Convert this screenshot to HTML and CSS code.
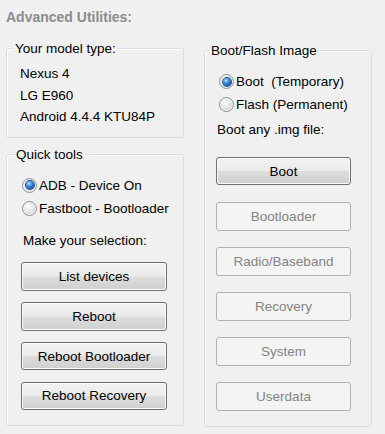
FILE: index.html
```html
<!DOCTYPE html>
<html>
<head>
<meta charset="utf-8">
<title>Advanced Utilities</title>
<link rel="stylesheet" href="styles.css">
</head>
<body>
<div class="page">
  <div class="title">Advanced Utilities:</div>
  <div class="columns">
    <div class="col col-left">
      <fieldset class="group model">
        <legend>Your model type:</legend>
        <div class="info">Nexus 4</div>
        <div class="info">LG E960</div>
        <div class="info">Android 4.4.4 KTU84P</div>
      </fieldset>
      <fieldset class="group quick">
        <legend>Quick tools</legend>
        <label class="radio-row"><span class="radio checked"></span><span class="radio-text">ADB - Device On</span></label>
        <label class="radio-row"><span class="radio"></span><span class="radio-text">Fastboot - Bootloader</span></label>
        <div class="hint">Make your selection:</div>
        <div class="buttons">
          <button class="btn">List devices</button>
          <button class="btn">Reboot</button>
          <button class="btn">Reboot Bootloader</button>
          <button class="btn">Reboot Recovery</button>
        </div>
      </fieldset>
    </div>
    <div class="col col-right">
      <fieldset class="group flash">
        <legend>Boot/Flash Image</legend>
        <label class="radio-row"><span class="radio checked"></span><span class="radio-text">Boot  (Temporary)</span></label>
        <label class="radio-row"><span class="radio"></span><span class="radio-text">Flash (Permanent)</span></label>
        <div class="hint">Boot any .img file:</div>
        <button class="btn boot-btn">Boot</button>
        <div class="disabled-list">
          <button class="btn" disabled>Bootloader</button>
          <button class="btn" disabled>Radio/Baseband</button>
          <button class="btn" disabled>Recovery</button>
          <button class="btn" disabled>System</button>
          <button class="btn" disabled>Userdata</button>
        </div>
      </fieldset>
    </div>
  </div>
</div>
</body>
</html>
```
FILE: styles.css
```css
* { box-sizing: border-box; }

html, body {
  margin: 0;
  padding: 0;
  background: #f0f0f0;
}

body {
  width: 385px;
  height: 434px;
  overflow: hidden;
  font-family: "Liberation Sans", Arial, sans-serif;
  font-size: 13.5px;
  color: #000;
}

.page {
  padding: 9px 0 0 6px;
}

.title {
  font-size: 14px;
  font-weight: bold;
  line-height: 16px;
  color: #8c8c8c;
}

.columns {
  display: flex;
  align-items: flex-start;
  gap: 20px;
  margin-top: 15.5px;
}

.col {
  display: flex;
  flex-direction: column;
}

.col-right {
  margin-top: 2px;
}

.group {
  margin: 0;
  min-width: 0;
  border: 1px solid #d5dfe5;
  border-radius: 3px;
  box-shadow: inset 1px 1px 0 #ffffff;
}

.group legend {
  font-size: 13.5px;
  line-height: 15px;
  padding: 0 1px;
  margin-left: -6px;
}

.model {
  width: 178px;
  padding: 7.5px 6px 9px 13px;
}

.info {
  line-height: 21.5px;
  height: 21.5px;
}

.quick {
  width: 178px;
  margin-top: 9.5px;
  padding: 11.8px 6px 15px 14px;
}

.flash {
  width: 168px;
  padding: 12.5px 6px 15px 11px;
}

.radio-row {
  display: flex;
  align-items: center;
  height: 23px;
  gap: 2px;
}

.quick .radio-row { margin-left: 1px; }
.flash .radio-row { margin-left: 3px; }

.radio-text {
  white-space: pre;
  line-height: 15px;
}

.radio {
  position: relative;
  width: 15px;
  height: 15px;
  flex: none;
  border-radius: 50%;
  border: 1px solid #8e9497;
  background: radial-gradient(circle at 40% 35%, #fdfdfd 0%, #e6e6e6 45%, #cfcfcf 100%);
  box-shadow: inset 0 0 0 1px #f4f4f4;
}

.radio.checked::after {
  content: "";
  position: absolute;
  left: 2.5px;
  top: 2.5px;
  width: 8px;
  height: 8px;
  border-radius: 50%;
  background: radial-gradient(circle at 38% 32%, #c4e8ff 0%, #4a9be6 30%, #1656a8 70%, #0b3272 100%);
  box-shadow: 0 0 0 1px #1f4f8a;
}

.hint {
  line-height: 15px;
}

.quick .hint {
  margin: 13.7px 0 0 2px;
}

.flash .hint {
  margin: 6.3px 0 0 1px;
}

.buttons {
  display: flex;
  flex-direction: column;
  gap: 11.2px;
  margin-top: 14px;
}

.btn {
  display: block;
  font-family: "Liberation Sans", Arial, sans-serif;
  font-size: 13.5px;
  color: #000;
  height: 28.5px;
  padding: 0;
  margin: 0;
  border: 1px solid #707070;
  border-radius: 3px;
  background: linear-gradient(to bottom, #f2f2f2 0%, #ebebeb 48%, #dddddd 52%, #cfcfcf 100%);
  box-shadow: inset 0 0 0 1px #fcfcfc;
  text-align: center;
}

.quick .btn {
  width: 146px;
}

.flash .btn {
  width: 135px;
}

.boot-btn {
  margin-top: 19.7px;
}

.disabled-list {
  display: flex;
  flex-direction: column;
  gap: 16.5px;
  margin-top: 16.8px;
}

.btn:disabled {
  color: #838383;
  border-color: #adb2b5;
  background: #f4f4f4;
  box-shadow: none;
}
```
